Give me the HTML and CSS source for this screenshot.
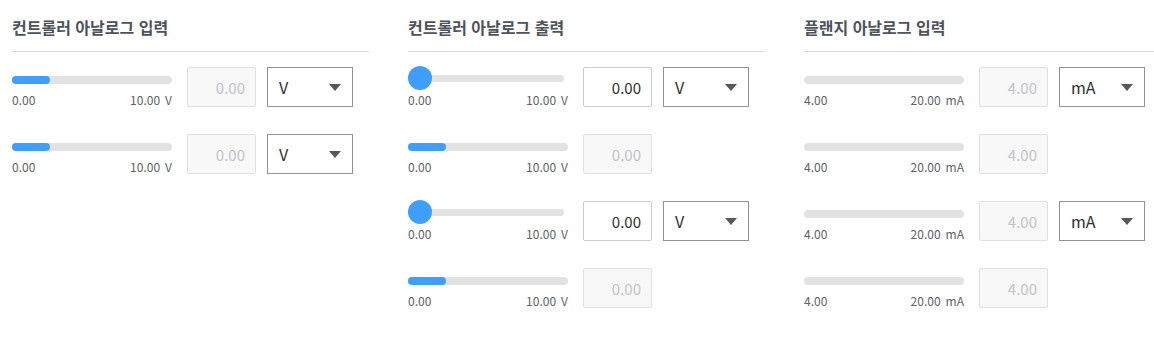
FILE: index.html
```html
<!DOCTYPE html>
<html lang="ko">
<head>
    <meta charset="UTF-8">
    <title>아날로그 입출력</title>
    <link rel="stylesheet" href="styles.css">
</head>
<body>
<main class="panels">
    <!-- 컨트롤러 입력 -->
    <section class="panel">
        <h2 class="panel-title">컨트롤러 아날로그 입력</h2>
        <div class="row">
            <div class="slider">
                <div class="track"><div class="fill" style="width:38px"></div></div>
                <div class="range"><span>0.00</span><span>10.00<i>V</i></span></div>
            </div>
            <input class="value" type="text" value="0.00" disabled>
            <div class="select"><span>V</span><b class="caret"></b></div>
        </div>
        <div class="row">
            <div class="slider">
                <div class="track"><div class="fill" style="width:38px"></div></div>
                <div class="range"><span>0.00</span><span>10.00<i>V</i></span></div>
            </div>
            <input class="value" type="text" value="0.00" disabled>
            <div class="select"><span>V</span><b class="caret"></b></div>
        </div>
    </section>

    <!-- 컨트롤러 출력 -->
    <section class="panel">
        <h2 class="panel-title">컨트롤러 아날로그 출력</h2>
        <div class="row">
            <div class="slider">
                <div class="track short"><span class="thumb"></span></div>
                <div class="range"><span>0.00</span><span>10.00<i>V</i></span></div>
            </div>
            <input class="value" type="text" value="0.00">
            <div class="select"><span>V</span><b class="caret"></b></div>
        </div>
        <div class="row">
            <div class="slider">
                <div class="track"><div class="fill" style="width:38px"></div></div>
                <div class="range"><span>0.00</span><span>10.00<i>V</i></span></div>
            </div>
            <input class="value" type="text" value="0.00" disabled>
        </div>
        <div class="row">
            <div class="slider">
                <div class="track short"><span class="thumb"></span></div>
                <div class="range"><span>0.00</span><span>10.00<i>V</i></span></div>
            </div>
            <input class="value" type="text" value="0.00">
            <div class="select"><span>V</span><b class="caret"></b></div>
        </div>
        <div class="row">
            <div class="slider">
                <div class="track"><div class="fill" style="width:38px"></div></div>
                <div class="range"><span>0.00</span><span>10.00<i>V</i></span></div>
            </div>
            <input class="value" type="text" value="0.00" disabled>
        </div>
    </section>

    <!-- 플랜지 입력 -->
    <section class="panel">
        <h2 class="panel-title">플랜지 아날로그 입력</h2>
        <div class="row">
            <div class="slider">
                <div class="track"></div>
                <div class="range"><span>4.00</span><span>20.00<i>mA</i></span></div>
            </div>
            <input class="value" type="text" value="4.00" disabled>
            <div class="select"><span>mA</span><b class="caret"></b></div>
        </div>
        <div class="row">
            <div class="slider">
                <div class="track"></div>
                <div class="range"><span>4.00</span><span>20.00<i>mA</i></span></div>
            </div>
            <input class="value" type="text" value="4.00" disabled>
        </div>
        <div class="row">
            <div class="slider">
                <div class="track"></div>
                <div class="range"><span>4.00</span><span>20.00<i>mA</i></span></div>
            </div>
            <input class="value" type="text" value="4.00" disabled>
            <div class="select"><span>mA</span><b class="caret"></b></div>
        </div>
        <div class="row">
            <div class="slider">
                <div class="track"></div>
                <div class="range"><span>4.00</span><span>20.00<i>mA</i></span></div>
            </div>
            <input class="value" type="text" value="4.00" disabled>
        </div>
    </section>
</main>
</body>
</html>
```

FILE: styles.css
```css
html, body{
    margin: 0;
    overflow: hidden;
    background-color: white;
}
body{
    font-family: "Noto Sans CJK KR", "Noto Sans", sans-serif;
    color: #606266;
}
.panels{
    display: flex;
    gap: 39px;
    padding-left: 12px;
    padding-top: 16px;
}
.panel{
    flex: 0 0 357px;
}
.panel-title{
    margin: 0 0 15px 0;
    font-size: 16px;
    line-height: 22px;
    font-weight: bold;
    color: #4d525b;
    padding-bottom: 13px;
    border-bottom: 1px solid #dcdcdc;
}
.row{
    display: flex;
    align-items: flex-start;
    height: 40px;
    margin-bottom: 27px;
}
.slider{
    width: 160px;
    padding-top: 9px;
}
.track{
    position: relative;
    height: 8px;
    border-radius: 4px;
    background-color: #e2e2e2;
}
.track.short{
    width: 156px;
    top: -1px;
    height: 7px;
}
.fill{
    height: 100%;
    border-radius: 4px;
    background-color: #409eff;
}
.thumb{
    position: absolute;
    left: 0;
    top: -9px;
    width: 24px;
    height: 24px;
    border-radius: 50%;
    background-color: #409eff;
}
.track.short + .range{
    margin-top: 9px;
}
.range{
    display: flex;
    justify-content: space-between;
    margin-top: 8px;
    font-size: 12px;
    line-height: 16px;
    color: #606266;
}
.range i{
    font-style: normal;
    margin-left: 5px;
}
.value{
    box-sizing: border-box;
    width: 69px;
    height: 40px;
    margin-left: 15px;
    padding: 0 10px;
    border: 1px solid #cccccc;
    border-radius: 2px;
    background-color: white;
    font-family: inherit;
    font-size: 15px;
    text-align: right;
    color: #303133;
    outline: none;
}
.value:disabled{
    background-color: #f8f8f8;
    border-color: #e0e0e0;
    color: #c0c4cc;
}
.select{
    box-sizing: border-box;
    width: 86px;
    height: 40px;
    margin-left: 11px;
    padding: 0 11px;
    display: flex;
    align-items: center;
    justify-content: space-between;
    border: 1px solid #8f9196;
    font-size: 16px;
    color: #303133;
}
.caret{
    width: 0;
    height: 0;
    border-left: 6px solid transparent;
    border-right: 6px solid transparent;
    border-top: 7px solid #55585e;
}
```
